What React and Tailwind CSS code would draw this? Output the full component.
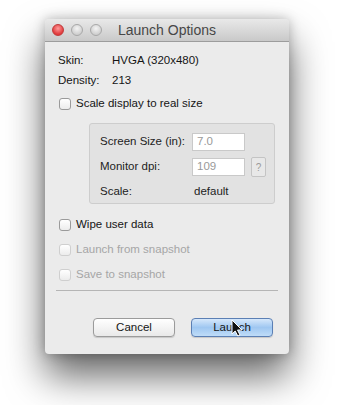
const font = "font-['Lucida_Grande','Liberation_Sans',sans-serif]";

function Checkbox({ label, disabled }) {
  return (
    <div className="flex h-[20px] items-center gap-[5px] pl-[1px]">
      <span
        className={`h-[12px] w-[12px] rounded-[3px] border bg-gradient-to-b from-white to-[#ececec] ${
          disabled ? 'border-[#cfcfcf]' : 'border-[#9a9a9a]'
        }`}
      />
      <span className={disabled ? 'text-[#a6a6a6]' : 'text-[#151515]'}>{label}</span>
    </div>
  );
}

function Cursor() {
  return (
    <svg className="absolute left-[39px] top-[0px]" width="12" height="18" viewBox="0 0 12 18">
      <path d="M1 1 L1 15 L4.2 12 L6.8 17 L9 16 L6.5 11 L11 11 Z" fill="#111" stroke="#fff" strokeWidth="1" />
    </svg>
  );
}

export default function App() {
  return (
    <div className={`h-[405px] w-[338px] bg-white pl-[45px] pt-[19px] text-[11.5px] ${font}`}>
      <div className="flex h-[335px] w-[244px] flex-col rounded-[4px] bg-[#ebebeb] shadow-[0_22px_38px_rgba(0,0,0,0.6),0_0_12px_rgba(0,0,0,0.25)]">
        {/* title bar */}
        <div className="grid h-[23px] grid-cols-[1fr_auto_1fr] items-center rounded-t-[4px] border-b border-[#9c9c9c] bg-gradient-to-b from-[#e9e9e9] to-[#c9c9c9]">
          <div className="flex items-center gap-[7px] pl-[7px]">
            <span className="h-[12px] w-[12px] rounded-full border border-[#c03a3a] bg-[radial-gradient(circle_at_50%_35%,#ff9a9a,#e0383a_70%)]" />
            <span className="h-[12px] w-[12px] rounded-full border border-[#a8a8a8] bg-[radial-gradient(circle_at_50%_35%,#f4f4f4,#cfcfcf_70%)]" />
            <span className="h-[12px] w-[12px] rounded-full border border-[#a8a8a8] bg-[radial-gradient(circle_at_50%_35%,#f4f4f4,#cfcfcf_70%)]" />
          </div>
          <div className="text-[14px] text-[#474747]">Launch Options</div>
          <div />
        </div>

        {/* body */}
        <div className="flex flex-1 flex-col px-[13px] pt-[9px]">
          <div className="flex h-[20px] items-center text-[#151515]">
            <span className="w-[54px]">Skin:</span>
            <span>HVGA (320x480)</span>
          </div>
          <div className="flex h-[20px] items-center text-[#151515]">
            <span className="w-[54px]">Density:</span>
            <span>213</span>
          </div>
          <div className="mt-[3px]">
            <Checkbox label="Scale display to real size" />
          </div>

          <div className="ml-[31px] mt-[9px] flex h-[81px] w-[186px] flex-col gap-[7px] rounded-[3px] border border-[#cdcdcd] bg-[#e2e2e2] pl-[10px] pt-[9px] text-[#222]">
            <div className="flex h-[18px] items-center">
              <span className="w-[92px]">Screen Size (in):</span>
              <span className="flex h-[18px] w-[53px] items-center border border-[#c9c9c9] bg-white pl-[4px] text-[#9a9a9a]">7.0</span>
            </div>
            <div className="flex h-[18px] items-center">
              <span className="w-[92px]">Monitor dpi:</span>
              <span className="flex h-[18px] w-[53px] items-center border border-[#c9c9c9] bg-white pl-[4px] text-[#9a9a9a]">109</span>
              <span className="ml-[6px] flex h-[20px] w-[15px] items-center justify-center rounded-[2px] border border-[#c4c4c4] bg-[#e8e8e8] text-[10px] text-[#9a9a9a]">?</span>
            </div>
            <div className="flex h-[18px] items-center">
              <span className="w-[94px]">Scale:</span>
              <span>default</span>
            </div>
          </div>

          <div className="mt-[11px] flex flex-col gap-[5px]">
            <Checkbox label="Wipe user data" />
            <Checkbox label="Launch from snapshot" disabled />
            <Checkbox label="Save to snapshot" disabled />
          </div>

          <div className="-mx-[2px] mt-[5px] h-px bg-[#b5b5b5]" />

          <div className="mt-[27px] flex justify-end gap-[16px] pr-[3px]">
            <button className="h-[19px] w-[82px] rounded-[4px] border border-[#9b9b9b] bg-gradient-to-b from-white to-[#e9e9e9] text-[#151515] shadow-[0_1px_1px_rgba(0,0,0,0.15)]">
              Cancel
            </button>
            <button className="relative h-[19px] w-[82px] rounded-[4px] border border-[#5b7fb4] bg-gradient-to-b from-[#d6e8fb] via-[#9fc7f1] to-[#bfdcf8] text-[#151515] shadow-[0_1px_1px_rgba(0,0,0,0.15)]">
              Launch
              <Cursor />
            </button>
          </div>
        </div>
      </div>
    </div>
  );
}
